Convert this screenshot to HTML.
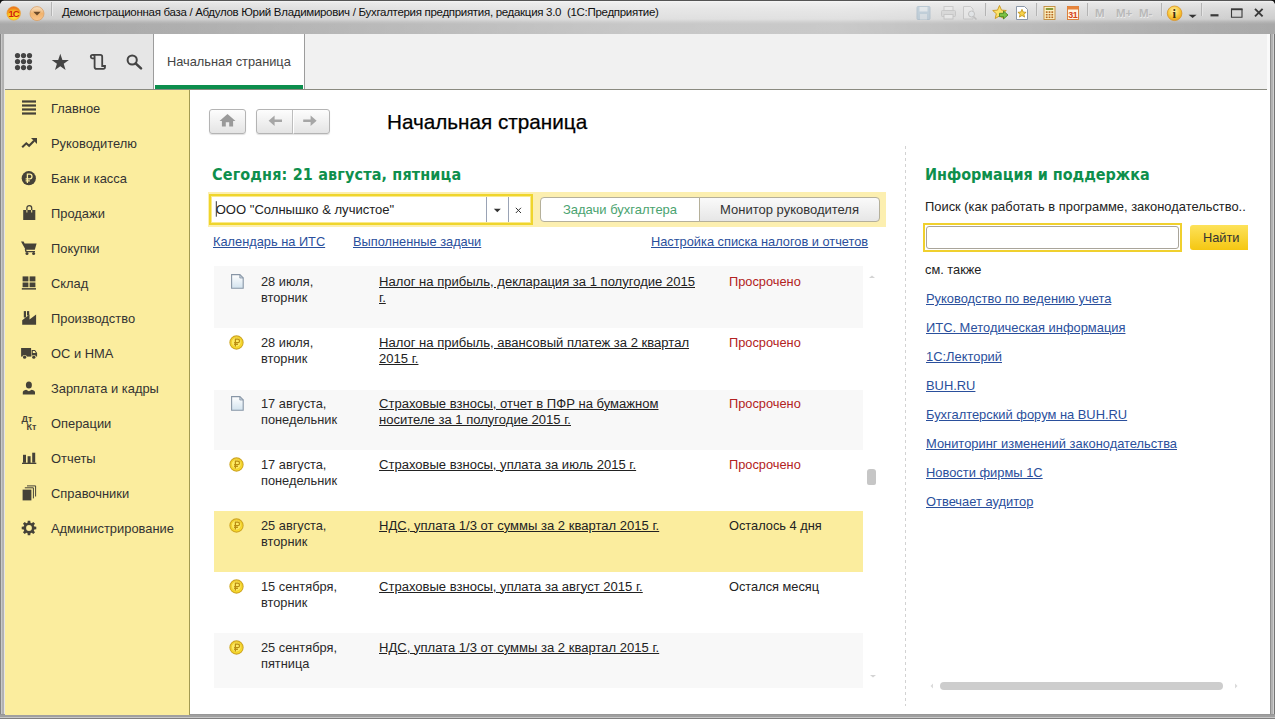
<!DOCTYPE html>
<html lang="ru"><head><meta charset="utf-8"><title>1С:Предприятие</title>
<style>
*{box-sizing:border-box;margin:0;padding:0}
html,body{width:1275px;height:719px;overflow:hidden;background:#fff}
body{font-family:"Liberation Sans",Arial,sans-serif;font-size:12.8px;color:#333;position:relative}
.abs{position:absolute}
#frame{position:absolute;left:0;top:0;width:1275px;height:719px;background:#a2a2a2}
#frame i{position:absolute;display:block}
#titlebar{position:absolute;left:0;top:0;width:1275px;height:34px;background:linear-gradient(#555 0,#555 1px,rgba(255,255,255,.0) 1px),linear-gradient(90deg,rgba(255,255,255,0) 0,rgba(255,255,255,.06) 12%,rgba(255,255,255,.36) 50%,rgba(255,255,255,.38) 66%,rgba(255,255,255,.05) 94%,rgba(255,255,255,0) 100%),linear-gradient(#555 0,#555 1px,#f2f2f2 1px,#e4e4e4 3px,#d8d8d8 10px,#cecece 19px,#b4b4b4 22px,#a9a9a9 24px,#a8a8a8 33.500px,#bdbdbd 34px)}
#title{position:absolute;left:62px;top:6px;font-size:11.5px;color:#111;white-space:pre;letter-spacing:-.3px}
#toolbar{position:absolute;left:5px;top:34px;width:1262px;height:56px;background:#f1f1f1;border-bottom:1px solid #8a8a80}
#tbleft{position:absolute;left:0;top:0;width:148px;height:55px;background:#e6e6e6}
#tab{position:absolute;left:148px;top:0;width:152px;height:55px;background:#fff;border-left:1px solid #9c9c9c;border-right:1px solid #9c9c9c}
#tab span{position:absolute;left:13px;top:20px;font-size:12.8px;color:#444;white-space:nowrap}
#tab i{position:absolute;left:1px;right:1px;bottom:0;height:4px;background:#0c8e4d}
#work{position:absolute;left:5px;top:90px;width:1265px;height:624px;background:#fff}
#side{position:absolute;left:0;top:0;width:185px;height:625px;background:#fbed9e;border-right:1px solid #a39a52}
.mi{position:absolute;left:46px;font-size:12.900px;color:#333;white-space:nowrap}

#main{position:absolute;left:185px;top:0;width:1058px;height:624px;background:#fff;overflow:hidden}
#mi{position:absolute;left:0;top:-1px;width:1080px;height:625px}
/* coordinates inside #main are page coords minus (190,89) */
.nb{position:absolute;top:20px;height:25px;border:1px solid #b4b4b4;border-radius:3px;background:linear-gradient(#fdfdfd,#e4e4e4);box-shadow:0 1px 1px rgba(0,0,0,.12)}
#h1{position:absolute;left:197px;top:21px;font-size:20.7px;color:#000;-webkit-text-stroke:.25px #000;white-space:nowrap}
.gh{position:absolute;font-family:"DejaVu Sans Condensed","DejaVu Sans",sans-serif;font-weight:bold;font-size:16px;letter-spacing:.15px;color:#0e8f4c;white-space:nowrap}
#ybar{position:absolute;left:18px;top:103px;width:678px;height:35px;background:#fcefb0}
#org{position:absolute;left:19px;top:105px;width:324px;height:31px;border:2px solid #efd52c;box-shadow:inset 0 0 0 1px #f9e98c;background:#fff}
#org span{position:absolute;left:4.7px;top:6px;font-size:13.050px;color:#222;white-space:nowrap}
.seg{position:absolute;top:107.500px;height:25px;border:1px solid #b5b09a;font-size:13px;text-align:center;line-height:23px;white-space:nowrap}
a,.lk{color:#2a4f9c;text-decoration:underline;white-space:nowrap}
.l1{position:absolute;top:145px;font-size:12.8px}
#list{position:absolute;left:24px;top:177px;width:649px;height:422px;overflow:hidden}
.row{position:absolute;left:0;width:650px;height:61px}
.bg{position:absolute;left:0;width:649px}
.row .d{position:absolute;left:47px;top:7.500px;line-height:16px;color:#2a2a2a}
.row .t{position:absolute;left:165px;top:7.500px;font-size:13.050px;line-height:16px;color:#222;text-decoration:underline;white-space:nowrap}
.row .s{position:absolute;left:515px;top:7.500px;line-height:16px;color:#222;white-space:nowrap}
.row .s.r{color:#b22222}
.coin{position:absolute;left:15.400px;top:7.500px;width:15px;height:15px}
.doc{position:absolute;left:17px;top:8px;width:13px;height:15px}
#vsep{position:absolute;left:715px;top:57px;width:1px;height:560px;background:repeating-linear-gradient(#d2d2d2 0,#d2d2d2 3px,#fff 3px,#fff 6px)}
.rl{position:absolute;left:736px;font-size:12.900px}
</style></head><body>
<div id="frame">
<i style="left:0;top:0;width:5px;height:719px;background:linear-gradient(90deg,#858585 0,#858585 .8px,#cacaca 1px,#c6c6c6 2.200px,#b2b2b2 2.500px,#b0b0b0 4.300px,#e4e4e4 4.500px,#e4e4e4 5px)"></i>
<i style="left:1270px;top:0;width:5px;height:719px;background:linear-gradient(90deg,#8e8e8e 0,#8e8e8e 1px,#b2b2b2 1px,#b2b2b2 3px,#d0d0d0 3px,#d0d0d0 4px,#757575 4px,#757575 5px)"></i>
<i style="left:0;top:714px;width:1275px;height:5px;background:linear-gradient(#8e8e8e 0,#a0a0a0 1px,#a0a0a0 3px,#c8c8c8 3px,#c8c8c8 4px,#808080 4px,#808080 5px)"></i>
</div>
<div id="titlebar"><svg class="abs" style="left:0;top:0" width="1275" height="34" viewBox="0 0 1275 34" font-family="Liberation Sans,sans-serif">
<defs>
<radialGradient id="g1c" cx=".5" cy=".75" r=".8"><stop offset="0" stop-color="#ffe93a"/><stop offset=".5" stop-color="#fbc21d"/><stop offset="1" stop-color="#e8541a"/></radialGradient>
<linearGradient id="gdd" x1="0" y1="0" x2="0" y2="1"><stop offset="0" stop-color="#f7e2c6"/><stop offset=".5" stop-color="#f1b36d"/><stop offset="1" stop-color="#f8c58e"/></linearGradient>
<radialGradient id="ginf" cx=".45" cy=".35" r=".7"><stop offset="0" stop-color="#fff1a8"/><stop offset=".6" stop-color="#f9c533"/><stop offset="1" stop-color="#e79a1c"/></radialGradient>
</defs>
<path d="M0 0h4Q1 1 0 4z" fill="#111"/><path d="M1275 0h-4q3 1 4 4z" fill="#111"/>
<circle cx="13.700" cy="13.400" r="6.800" fill="url(#g1c)" stroke="#e9a23a" stroke-width=".6"/>
<text x="8.400" y="16.600" font-size="9.500" font-weight="bold" fill="#d3200c" letter-spacing="-.8">1С</text>
<circle cx="37" cy="13.600" r="7" fill="url(#gdd)" stroke="#d9a066" stroke-width=".8"/>
<path d="M33.300 11.800h7.400l-3.700 3.800z" fill="#6b4a2a"/>
<path d="M51.500 2v14" stroke="#b4b4b4"/><path d="M52.500 2v14" stroke="#e9e9e9"/>
<!-- right icons -->
<g opacity=".4"><rect x="917" y="6.500" width="13" height="13" rx="1" fill="#8fb2cc" stroke="#7a9bb5"/><rect x="919.500" y="7" width="8" height="4.500" fill="#dfeaf2"/><rect x="920" y="14" width="7" height="5.500" fill="#c9d9e5"/></g>
<g opacity=".35"><rect x="944" y="6.500" width="9" height="5" fill="#f4f4f4" stroke="#999"/><rect x="941.500" y="10.500" width="14" height="6" rx="1" fill="#c9c9c9" stroke="#999"/><rect x="944" y="14.500" width="9" height="4.500" fill="#f8f8f8" stroke="#999"/></g>
<g opacity=".35"><path d="M963.500 6.500h7l2.500 2.500v10h-9.500z" fill="#f2f2f2" stroke="#999"/><circle cx="971.500" cy="14" r="3" fill="#e6eef4" stroke="#888"/><path d="M973.500 16.500l3 3" stroke="#888" stroke-width="1.500"/></g>
<path d="M985.500 3v13" stroke="#b4b4b4"/><path d="M986.500 3v13" stroke="#e4e4e4"/>
<path d="M999.500 5.500l2 4.600 4.800.4-3.600 3.200 1.100 4.800-4.300-2.600-4.300 2.600 1.100-4.800-3.600-3.200 4.800-.4z" fill="#fbe26a" stroke="#c9951b" stroke-width=".9"/>
<path d="M999.500 13.300h4v-2.300l4.500 4-4.500 4v-2.300h-4z" fill="#7ac143" stroke="#3f7f1e" stroke-width=".8"/>
<path d="M1016.500 6.500h8l3 3v10h-11z" fill="#fff" stroke="#7f8da0" stroke-width=".9"/>
<path d="M1022 9.300l1.200 2.700 2.900.3-2.200 1.900.7 2.900-2.600-1.600-2.600 1.600.7-2.900-2.200-1.900 2.900-.3z" fill="#f6d24a" stroke="#b8860b" stroke-width=".7"/>
<path d="M1036.500 3v13" stroke="#b4b4b4"/><path d="M1037.500 3v13" stroke="#e4e4e4"/>
<rect x="1044" y="6.500" width="11" height="13" fill="#fdf2c4" stroke="#c08a3c" stroke-width=".9"/>
<rect x="1045.800" y="8" width="7.400" height="2" fill="#8a9a3a"/>
<g fill="#b5651d"><rect x="1045.800" y="11.300" width="1.800" height="1.600"/><rect x="1048.600" y="11.300" width="1.800" height="1.600"/><rect x="1051.400" y="11.300" width="1.800" height="1.600"/><rect x="1045.800" y="13.900" width="1.800" height="1.600"/><rect x="1048.600" y="13.900" width="1.800" height="1.600"/><rect x="1051.400" y="13.900" width="1.800" height="1.600"/><rect x="1045.800" y="16.500" width="1.800" height="1.600"/><rect x="1048.600" y="16.500" width="1.800" height="1.600"/><rect x="1051.400" y="16.500" width="1.800" height="1.600"/></g>
<rect x="1067.500" y="6.500" width="11" height="13" fill="#fff6e6" stroke="#d9772e" stroke-width=".9"/>
<rect x="1067.500" y="6.500" width="11" height="3" fill="#e8843a"/>
<text x="1068.300" y="18.300" font-size="9" font-weight="bold" fill="#d6451d" letter-spacing="-.6">31</text>
<path d="M1087.500 3v13" stroke="#b4b4b4"/><path d="M1088.500 3v13" stroke="#e4e4e4"/>
<g font-size="11.500" font-weight="bold" fill="#b9b9b9"><text x="1095.500" y="17.600" fill="#ececec">M</text><text x="1095" y="17">M</text><text x="1116.500" y="17.600" fill="#ececec">M+</text><text x="1116" y="17">M+</text><text x="1139.500" y="17.600" fill="#ececec">M-</text><text x="1139" y="17">M-</text></g>
<path d="M1161.500 3v13" stroke="#b4b4b4"/><path d="M1162.500 3v13" stroke="#e4e4e4"/>
<circle cx="1174.600" cy="13.300" r="7.300" fill="url(#ginf)" stroke="#d8962a" stroke-width=".8"/>
<text x="1172.600" y="18" font-size="12.500" font-weight="bold" fill="#3b2c10" font-family="Liberation Serif,serif">i</text>
<path d="M1188.600 14.700h8l-4 3.300z" fill="#333"/>
<path d="M1201.500 3v13" stroke="#b4b4b4"/><path d="M1202.500 3v13" stroke="#e4e4e4"/>
<rect x="1210.500" y="14.200" width="8" height="2.200" fill="#3a3a3a"/>
<path d="M1231.500 9.300h10.500v8h-10.500z" fill="none" stroke="#3a3a3a" stroke-width="1.100"/><path d="M1231 9.300h11.500" stroke="#3a3a3a" stroke-width="1.800"/>
<path d="M1255 8.800l7.600 7.600M1262.600 8.800l-7.600 7.600" stroke="#3a3a3a" stroke-width="1.900"/>
</svg><div id="title">Демонстрационная база / Абдулов Юрий Владимирович / Бухгалтерия предприятия, редакция 3.0  (1С:Предприятие)</div></div>
<div id="toolbar"><div id="tbleft"><svg class="abs" style="left:0;top:0" width="148" height="54" viewBox="5 34 148 54">
<g fill="#444"><circle cx="17.5" cy="55.6" r="2.6"/><circle cx="17.5" cy="61.6" r="2.6"/><circle cx="17.5" cy="67.6" r="2.6"/><circle cx="23.5" cy="55.6" r="2.6"/><circle cx="23.5" cy="61.6" r="2.6"/><circle cx="23.5" cy="67.6" r="2.6"/><circle cx="29.5" cy="55.6" r="2.6"/><circle cx="29.5" cy="61.6" r="2.6"/><circle cx="29.5" cy="67.6" r="2.6"/></g>
<path d="M60.3 53.8l2.1 6.1h6.5l-5.2 3.9 1.9 6.2-5.3-3.8-5.3 3.8 1.9-6.2-5.2-3.9h6.5z" fill="#444"/>
<path d="M92 58.3h2.6V56.8a1.9 1.9 0 0 0-3.8 0v0a1.5 1.5 0 0 0 1.2 1.5M92.7 54.9h7.6a1.9 1.9 0 0 1 1.9 1.9V66h2.8v1a1.8 1.8 0 0 1-1.8 1.8h-6.7a1.9 1.9 0 0 1-1.9-1.900V58.300" fill="none" stroke="#444" stroke-width="1.800"/>
<circle cx="132.200" cy="60" r="4.600" fill="none" stroke="#444" stroke-width="2"/><path d="M135.600 63.400l5.400 5" stroke="#444" stroke-width="2.600" stroke-linecap="round"/>
</svg></div><div id="tab"><span>Начальная страница</span><i></i></div></div>
<div class="abs" style="left:1267px;top:34px;width:3px;height:56px;background:#fafafa"></div>
<div id="work">
<div id="side">
<svg class="abs" style="left:15px;top:9px" width="18" height="18" viewBox="0 0 18 18"><g fill="#454238"><rect x="2" y="1.4" width="14" height="2.2"/><rect x="2" y="5.4" width="14" height="2.2"/><rect x="2" y="9.4" width="14" height="2.2"/><rect x="2" y="13.4" width="14" height="2.2"/></g></svg>
<svg class="abs" style="left:15px;top:44px" width="18" height="18" viewBox="0 0 18 18"><path d="M2.2 13.2L6.3 9.3l2.8 2.4 5-5" fill="none" stroke="#454238" stroke-width="2.1"/><path d="M11 4h6v6z" fill="#454238"/></svg>
<svg class="abs" style="left:15px;top:79px" width="18" height="18" viewBox="0 0 18 18"><circle cx="8.8" cy="9.2" r="7.1" fill="#454238"/><path d="M7.4 14V5.2h2.3a2.3 2.3 0 0 1 0 4.6H5.6M5.6 11.9h4.2" fill="none" stroke="#fbed9e" stroke-width="1.3"/></svg>
<svg class="abs" style="left:15px;top:114px" width="18" height="18" viewBox="0 0 18 18"><path d="M3.2 6h12.1v10H3.2z" fill="#454238"/><path d="M6.9 8V4a2.4 2.4 0 0 1 4.8 0v4" fill="none" stroke="#454238" stroke-width="1.3"/><path d="M6.9 6v2.5M11.7 6v2.5" stroke="#fbed9e" stroke-width="1" /></svg>
<svg class="abs" style="left:15px;top:149px" width="18" height="18" viewBox="0 0 18 18"><path d="M1 2.6h2.6l1 2h12l-1.8 6.2H5.6z" fill="#454238"/><path d="M5.4 10l.6 2.6h9" fill="none" stroke="#454238" stroke-width="1.4"/><circle cx="7" cy="14.4" r="1.5" fill="#454238"/><circle cx="13.6" cy="14.4" r="1.5" fill="#454238"/></svg>
<svg class="abs" style="left:15px;top:184px" width="18" height="18" viewBox="0 0 18 18"><g fill="#454238"><rect x="2.6" y="2.4" width="5.8" height="5"/><rect x="9.6" y="2.4" width="5.8" height="5"/><rect x="2.6" y="8.5" width="5.8" height="4.7"/><rect x="9.6" y="8.5" width="5.8" height="4.7"/><rect x="1.8" y="14.1" width="14.2" height="1.5"/></g></svg>
<svg class="abs" style="left:15px;top:219px" width="18" height="18" viewBox="0 0 18 18"><path d="M2.2 15.8v-4.6L9.5 5.6v4.9l6.6-4.9v10.2z" fill="#454238"/><rect x="3.8" y="2.1" width="2.2" height="6.4" fill="#454238"/><rect x="7" y="2.1" width="2.2" height="4.4" fill="#454238"/></svg>
<svg class="abs" style="left:15px;top:254px" width="18" height="18" viewBox="0 0 18 18"><path d="M1.1 4h10v8.6h-10z" fill="#454238"/><path d="M11.6 6h3.4l2.1 3v3.6h-5.5z" fill="#454238"/><path d="M12.8 7.1h1.8l1.2 1.8h-3z" fill="#fbed9e"/><circle cx="4.6" cy="13.2" r="2.3" fill="#fbed9e"/><circle cx="13.8" cy="13.2" r="2.3" fill="#fbed9e"/><circle cx="4.6" cy="13.2" r="1.6" fill="#454238"/><circle cx="13.8" cy="13.2" r="1.6" fill="#454238"/></svg>
<svg class="abs" style="left:15px;top:289px" width="18" height="18" viewBox="0 0 18 18"><ellipse cx="8.9" cy="5.9" rx="3" ry="3.5" fill="#454238"/><path d="M2.8 15.6v-2.4q0-1.7 3.3-2.5l2.8 1.6 2.8-1.6q3.3.8 3.3 2.5v2.4z" fill="#454238"/></svg>
<svg class="abs" style="left:15px;top:324px" width="18" height="18" viewBox="0 0 18 18"><text x="1.6" y="8.4" font-family="Liberation Sans,sans-serif" font-weight="bold" font-size="9" fill="#454238">Дт</text><text x="6.6" y="16" font-family="Liberation Sans,sans-serif" font-weight="bold" font-size="9" fill="#454238">Кт</text></svg>
<svg class="abs" style="left:15px;top:359px" width="18" height="18" viewBox="0 0 18 18"><g fill="#454238"><rect x="3" y="5.8" width="3" height="8"/><rect x="7.6" y="7.2" width="3" height="7"/><rect x="12.2" y="3.7" width="3" height="10"/><rect x="2" y="13.7" width="14.3" height="1.3"/></g></svg>
<svg class="abs" style="left:15px;top:394px" width="18" height="18" viewBox="0 0 18 18"><path d="M2.6 5.6h8.8v10.8H2.6z" fill="#454238"/><path d="M4.8 3.8h8.6v10.6M7 1.9h8.6v10.6" fill="none" stroke="#454238" stroke-width="1"/></svg>
<svg class="abs" style="left:15px;top:429px" width="18" height="18" viewBox="0 0 18 18"><path d="M14.30 7.53L16.29 7.75L16.29 10.25L14.30 10.47L13.79 11.71L15.04 13.27L13.27 15.04L11.71 13.79L10.47 14.30L10.25 16.29L7.75 16.29L7.53 14.30L6.29 13.79L4.73 15.04L2.96 13.27L4.21 11.71L3.70 10.47L1.71 10.25L1.71 7.75L3.70 7.53L4.21 6.29L2.96 4.73L4.73 2.96L6.29 4.21L7.53 3.70L7.75 1.71L10.25 1.71L10.47 3.70L11.71 4.21L13.27 2.96L15.04 4.73L13.79 6.29z M11.9 9a2.9 2.9 0 1 0 -5.8 0a2.9 2.9 0 1 0 5.8 0z" fill="#454238" fill-rule="evenodd"/></svg>
<div class="mi" style="top:11px">Главное</div>
<div class="mi" style="top:46px">Руководителю</div>
<div class="mi" style="top:81px">Банк и касса</div>
<div class="mi" style="top:116px">Продажи</div>
<div class="mi" style="top:151px">Покупки</div>
<div class="mi" style="top:186px">Склад</div>
<div class="mi" style="top:221px">Производство</div>
<div class="mi" style="top:256px">ОС и НМА</div>
<div class="mi" style="top:291px">Зарплата и кадры</div>
<div class="mi" style="top:326px">Операции</div>
<div class="mi" style="top:361px">Отчеты</div>
<div class="mi" style="top:396px">Справочники</div>
<div class="mi" style="top:431px">Администрирование</div>
</div>
<div id="main"><div id="mi">
<div class="nb" style="left:19px;width:37px"><svg class="abs" style="left:0;top:0" width="36" height="24" viewBox="210 110.500 36 24"><path d="M227.500 114.600l8 6.800h-2.400v5.600h-3.900v-4.200h-3.400v4.200h-3.900v-5.600h-2.400z" fill="#9a9a9a"/></svg></div>
<div class="nb" style="left:66px;width:74px"><svg class="abs" style="left:0;top:0" width="73" height="24" viewBox="257 110.500 73 24"><path d="M292.500 110v24" stroke="#bdbdbd"/><path d="M293.500 110v24" stroke="#fff"/><path d="M268.600 121.300l6-5.200v4h7.400v2.400h-7.400v4z" fill="#a6a6a6"/><path d="M316.600 121.300l-6-5.200v4h-7.400v2.400h7.400v4z" fill="#a6a6a6"/></svg></div>
<div id="h1">Начальная страница</div>
<div class="gh" style="left:22px;top:76px">Сегодня: 21 августа, пятница</div>
<div id="ybar"></div>
<div id="org"><span>ООО "Солнышко &amp; лучистое"</span><svg class="abs" style="left:2px;top:1px" width="317" height="25" viewBox="213 197 317 25"><path d="M216.300 201.200v15.500" stroke="#333"/><path d="M486.500 197v25M508.500 197v25" stroke="#9aa3b5"/><path d="M493.800 208.800h7l-3.500 3.400z" fill="#333"/><path d="M515.800 207.800l5.200 5.200M521 207.800l-5.200 5.200" stroke="#333" stroke-width="1"/></svg></div>
<div class="seg" style="left:350px;width:160px;background:#fff;color:#4aa36f;border-radius:4px 0 0 4px">Задачи бухгалтера</div>
<div class="seg" style="left:509px;width:181px;background:linear-gradient(#fafafa,#e6e6e6);color:#333;border-radius:0 4px 4px 0">Монитор руководителя</div>
<a class="l1" style="left:23px">Календарь на ИТС</a>
<a class="l1" style="left:163px">Выполненные задачи</a>
<a class="l1" style="left:461px">Настройка списка налогов и отчетов</a>
<div id="list">
<div class="bg" style="top:0;height:62px;background:#f8f8f8"></div><div class="bg" style="top:124px;height:60px;background:#f8f8f8"></div><div class="bg" style="top:245px;height:61px;background:#fbed9e"></div><div class="bg" style="top:367px;height:60px;background:#f8f8f8"></div>
<div class="row g" style="top:0px"><svg class="doc" viewBox="0 0 13 15"><defs><linearGradient id="dg" x1="0" y1="0" x2="0" y2="1"><stop offset="0" stop-color="#fff"/><stop offset="1" stop-color="#d3e3ee"/></linearGradient></defs><path d="M.6.600h8.200l3.400 3.400v10.200H.6z" fill="url(#dg)" stroke="#8896a6" stroke-width="1.100"/><path d="M8.800.600v3.400h3.400z" fill="#c2cfda" stroke="#8896a6" stroke-width=".8"/></svg><div class="d">28 июля,<br>вторник</div><div class="t">Налог на прибыль, декларация за 1 полугодие 2015 <br>г.</div><div class="s r">Просрочено</div></div>
<div class="row " style="top:61px"><svg class="coin" viewBox="0 0 15 15"><circle cx="7.500" cy="7.500" r="6.600" fill="#f9de2a" stroke="#cfa624" stroke-width="1.100"/><circle cx="7.300" cy="7.200" r="4.900" fill="#fdea62" stroke="#e9bd22" stroke-width=".6"/><path d="M6.400 11.400V4.100h2.300a1.800 1.800 0 0 1 0 3.600H5.100M5.100 9.400h3.800" fill="none" stroke="#b98c10" stroke-width="1.200"/></svg><div class="d">28 июля,<br>вторник</div><div class="t">Налог на прибыль, авансовый платеж за 2 квартал <br>2015 г.</div><div class="s r">Просрочено</div></div>
<div class="row g" style="top:122px"><svg class="doc" viewBox="0 0 13 15"><defs><linearGradient id="dg" x1="0" y1="0" x2="0" y2="1"><stop offset="0" stop-color="#fff"/><stop offset="1" stop-color="#d3e3ee"/></linearGradient></defs><path d="M.6.600h8.200l3.400 3.400v10.200H.6z" fill="url(#dg)" stroke="#8896a6" stroke-width="1.100"/><path d="M8.800.600v3.400h3.400z" fill="#c2cfda" stroke="#8896a6" stroke-width=".8"/></svg><div class="d">17 августа,<br>понедельник</div><div class="t">Страховые взносы, отчет в ПФР на бумажном <br>носителе за 1 полугодие 2015 г.</div><div class="s r">Просрочено</div></div>
<div class="row " style="top:183px"><svg class="coin" viewBox="0 0 15 15"><circle cx="7.500" cy="7.500" r="6.600" fill="#f9de2a" stroke="#cfa624" stroke-width="1.100"/><circle cx="7.300" cy="7.200" r="4.900" fill="#fdea62" stroke="#e9bd22" stroke-width=".6"/><path d="M6.400 11.400V4.100h2.300a1.800 1.800 0 0 1 0 3.600H5.100M5.100 9.400h3.800" fill="none" stroke="#b98c10" stroke-width="1.200"/></svg><div class="d">17 августа,<br>понедельник</div><div class="t">Страховые взносы, уплата за июль 2015 г.</div><div class="s r">Просрочено</div></div>
<div class="row y" style="top:244px"><svg class="coin" viewBox="0 0 15 15"><circle cx="7.500" cy="7.500" r="6.600" fill="#f9de2a" stroke="#cfa624" stroke-width="1.100"/><circle cx="7.300" cy="7.200" r="4.900" fill="#fdea62" stroke="#e9bd22" stroke-width=".6"/><path d="M6.400 11.400V4.100h2.300a1.800 1.800 0 0 1 0 3.600H5.100M5.100 9.400h3.800" fill="none" stroke="#b98c10" stroke-width="1.200"/></svg><div class="d">25 августа,<br>вторник</div><div class="t">НДС, уплата 1/3 от суммы за 2 квартал 2015 г.</div><div class="s ">Осталось 4 дня</div></div>
<div class="row " style="top:305px"><svg class="coin" viewBox="0 0 15 15"><circle cx="7.500" cy="7.500" r="6.600" fill="#f9de2a" stroke="#cfa624" stroke-width="1.100"/><circle cx="7.300" cy="7.200" r="4.900" fill="#fdea62" stroke="#e9bd22" stroke-width=".6"/><path d="M6.400 11.400V4.100h2.300a1.800 1.800 0 0 1 0 3.600H5.100M5.100 9.400h3.800" fill="none" stroke="#b98c10" stroke-width="1.200"/></svg><div class="d">15 сентября,<br>вторник</div><div class="t">Страховые взносы, уплата за август 2015 г.</div><div class="s ">Остался месяц</div></div>
<div class="row g" style="top:366px"><svg class="coin" viewBox="0 0 15 15"><circle cx="7.500" cy="7.500" r="6.600" fill="#f9de2a" stroke="#cfa624" stroke-width="1.100"/><circle cx="7.300" cy="7.200" r="4.900" fill="#fdea62" stroke="#e9bd22" stroke-width=".6"/><path d="M6.400 11.400V4.100h2.300a1.800 1.800 0 0 1 0 3.600H5.100M5.100 9.400h3.800" fill="none" stroke="#b98c10" stroke-width="1.200"/></svg><div class="d">25 сентября,<br>пятница</div><div class="t">НДС, уплата 1/3 от суммы за 2 квартал 2015 г.</div><div class="s "></div></div>
</div>
<div class="abs" style="left:677px;top:380px;width:9px;height:16px;border-radius:3px 3px 2px 2px;background:#c6c6c6"></div>
<svg class="abs" style="left:677px;top:185px" width="10" height="6" viewBox="0 0 10 6"><path d="M2 4l3-2.500 3 2.500z" fill="#d4d4d4"/></svg>
<svg class="abs" style="left:678px;top:584px" width="10" height="6" viewBox="0 0 10 6"><path d="M2 2l3 2.500 3-2.500z" fill="#d4d4d4"/></svg>
<svg class="abs" style="left:739px;top:593px" width="6" height="8" viewBox="0 0 6 8"><path d="M4 1.500l-2.500 2.500 2.500 2.500z" fill="#dadada"/></svg>
<svg class="abs" style="left:1043px;top:593px" width="6" height="8" viewBox="0 0 6 8"><path d="M2 1.500l2.500 2.500-2.500 2.500z" fill="#dadada"/></svg>
<div id="vsep"></div>
<div class="gh" style="left:735px;top:76px;letter-spacing:-.02px">Информация и поддержка</div>
<div class="abs" style="left:735px;top:110px;white-space:nowrap;color:#222;font-size:12.900px">Поиск (как работать в программе, законодательство..</div>
<div class="abs" style="left:733px;top:134px;width:259px;height:29px;border:2px solid #f0d02e;background:#fff"><div style="position:absolute;left:1px;top:1px;right:1px;bottom:1px;border:1px solid #a9a49a;border-radius:3px"></div></div>
<div class="abs" style="left:1000px;top:136px;width:70px;height:25px;background:linear-gradient(#fde25a,#f5c712);border-radius:3px;line-height:25px;padding-left:13px;color:#333;overflow:hidden">Найти</div>
<div class="abs" style="left:735px;top:173px;color:#222">см. также</div>
<a class="rl" style="top:202px">Руководство по ведению учета</a>
<a class="rl" style="top:231px">ИТС. Методическая информация</a>
<a class="rl" style="top:260px">1С:Лекторий</a>
<a class="rl" style="top:289px">BUH.RU</a>
<a class="rl" style="top:318px">Бухгалтерский форум на BUH.RU</a>
<a class="rl" style="top:347px">Мониторинг изменений законодательства</a>
<a class="rl" style="top:376px">Новости фирмы 1С</a>
<a class="rl" style="top:405px">Отвечает аудитор</a>

<div class="abs" style="left:750px;top:593px;width:283px;height:8px;border-radius:4px;background:#cdcdcd"></div>
</div></div>
</div>
</body></html>
